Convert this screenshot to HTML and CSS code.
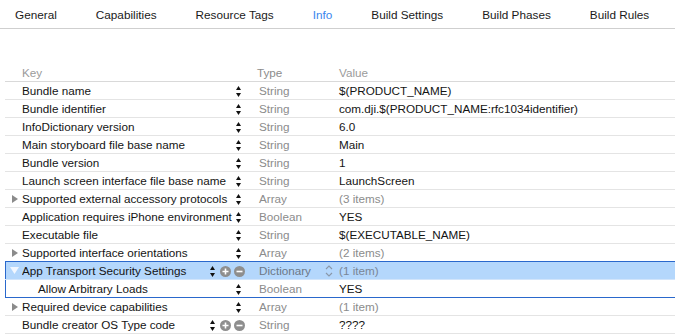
FILE: index.html
```html
<!DOCTYPE html>
<html lang="en">
  <head>
    <meta charset="UTF-8" />
    <title>Info</title>
    <link rel="stylesheet" href="styles.css">
  </head>
  <body>
    <div class="tabs">
      <span class="tab">General</span>
      <span class="tab">Capabilities</span>
      <span class="tab">Resource Tags</span>
      <span class="tab active">Info</span>
      <span class="tab">Build Settings</span>
      <span class="tab">Build Phases</span>
      <span class="tab">Build Rules</span>
    </div>

    <div class="plist">
      <div class="row head">
        <div class="key"><span class="disc"></span><span class="name">Key</span></div>
        <div class="type">Type</div>
        <div class="value">Value</div>
      </div>

      <div class="row">
        <div class="key"><span class="disc"></span><span class="name">Bundle name</span>
          <span class="ctrl"><svg class="stepper" width="5" height="11" viewBox="0 0 5 11"><path d="M0 4 L2.5 0 L5 4 Z M0 7 L5 7 L2.5 11 Z"/></svg></span>
        </div>
        <div class="type">String</div>
        <div class="value">$(PRODUCT_NAME)</div>
      </div>

      <div class="row">
        <div class="key"><span class="disc"></span><span class="name">Bundle identifier</span>
          <span class="ctrl"><svg class="stepper" width="5" height="11" viewBox="0 0 5 11"><path d="M0 4 L2.5 0 L5 4 Z M0 7 L5 7 L2.5 11 Z"/></svg></span>
        </div>
        <div class="type">String</div>
        <div class="value">com.dji.$(PRODUCT_NAME:rfc1034identifier)</div>
      </div>

      <div class="row">
        <div class="key"><span class="disc"></span><span class="name">InfoDictionary version</span>
          <span class="ctrl"><svg class="stepper" width="5" height="11" viewBox="0 0 5 11"><path d="M0 4 L2.5 0 L5 4 Z M0 7 L5 7 L2.5 11 Z"/></svg></span>
        </div>
        <div class="type">String</div>
        <div class="value">6.0</div>
      </div>

      <div class="row">
        <div class="key"><span class="disc"></span><span class="name">Main storyboard file base name</span>
          <span class="ctrl"><svg class="stepper" width="5" height="11" viewBox="0 0 5 11"><path d="M0 4 L2.5 0 L5 4 Z M0 7 L5 7 L2.5 11 Z"/></svg></span>
        </div>
        <div class="type">String</div>
        <div class="value">Main</div>
      </div>

      <div class="row">
        <div class="key"><span class="disc"></span><span class="name">Bundle version</span>
          <span class="ctrl"><svg class="stepper" width="5" height="11" viewBox="0 0 5 11"><path d="M0 4 L2.5 0 L5 4 Z M0 7 L5 7 L2.5 11 Z"/></svg></span>
        </div>
        <div class="type">String</div>
        <div class="value">1</div>
      </div>

      <div class="row">
        <div class="key"><span class="disc"></span><span class="name">Launch screen interface file base name</span>
          <span class="ctrl"><svg class="stepper" width="5" height="11" viewBox="0 0 5 11"><path d="M0 4 L2.5 0 L5 4 Z M0 7 L5 7 L2.5 11 Z"/></svg></span>
        </div>
        <div class="type">String</div>
        <div class="value">LaunchScreen</div>
      </div>

      <div class="row">
        <div class="key"><span class="disc"><svg class="tri" width="6" height="8" viewBox="0 0 6 8"><path d="M0 0 L6 4 L0 8 Z"/></svg></span><span class="name">Supported external accessory protocols</span>
          <span class="ctrl"><svg class="stepper" width="5" height="11" viewBox="0 0 5 11"><path d="M0 4 L2.5 0 L5 4 Z M0 7 L5 7 L2.5 11 Z"/></svg></span>
        </div>
        <div class="type">Array</div>
        <div class="value dim">(3 items)</div>
      </div>

      <div class="row">
        <div class="key"><span class="disc"></span><span class="name">Application requires iPhone environment</span>
          <span class="ctrl"><svg class="stepper" width="5" height="11" viewBox="0 0 5 11"><path d="M0 4 L2.5 0 L5 4 Z M0 7 L5 7 L2.5 11 Z"/></svg></span>
        </div>
        <div class="type">Boolean</div>
        <div class="value">YES</div>
      </div>

      <div class="row">
        <div class="key"><span class="disc"></span><span class="name">Executable file</span>
          <span class="ctrl"><svg class="stepper" width="5" height="11" viewBox="0 0 5 11"><path d="M0 4 L2.5 0 L5 4 Z M0 7 L5 7 L2.5 11 Z"/></svg></span>
        </div>
        <div class="type">String</div>
        <div class="value">$(EXECUTABLE_NAME)</div>
      </div>

      <div class="row before-sel">
        <div class="key"><span class="disc"><svg class="tri" width="6" height="8" viewBox="0 0 6 8"><path d="M0 0 L6 4 L0 8 Z"/></svg></span><span class="name">Supported interface orientations</span>
          <span class="ctrl"><svg class="stepper" width="5" height="11" viewBox="0 0 5 11"><path d="M0 4 L2.5 0 L5 4 Z M0 7 L5 7 L2.5 11 Z"/></svg></span>
        </div>
        <div class="type">Array</div>
        <div class="value dim">(2 items)</div>
      </div>

      <!-- selected dictionary and its child -->
      <div class="row selected">
        <div class="key"><span class="disc open"><svg width="9" height="7" viewBox="0 0 9 7"><path d="M0 0 L9 0 L4.5 7 Z"/></svg></span><span class="name">App Transport Security Settings</span>
          <span class="ctrl edit">
            <svg class="stepper" width="5" height="11" viewBox="0 0 5 11"><path d="M0 4 L2.5 0 L5 4 Z M0 7 L5 7 L2.5 11 Z"/></svg>
            <svg class="btn" width="11" height="11" viewBox="0 0 11 11"><circle cx="5.5" cy="5.5" r="5.5"/><path d="M2.5 5.5 H8.5 M5.5 2.5 V8.5"/></svg>
            <svg class="btn" width="11" height="11" viewBox="0 0 11 11"><circle cx="5.5" cy="5.5" r="5.5"/><path d="M2.5 5.5 H8.5"/></svg>
          </span>
        </div>
        <div class="type pop">Dictionary
          <svg class="chev" width="8" height="14" viewBox="0 0 8 14"><path d="M1 5 L4 2 L7 5 M1 9 L4 12 L7 9"/></svg>
        </div>
        <div class="value dim">(1 item)</div>
      </div>

      <div class="row child">
        <div class="key"><span class="disc"></span><span class="name indent">Allow Arbitrary Loads</span>
          <span class="ctrl"><svg class="stepper" width="5" height="11" viewBox="0 0 5 11"><path d="M0 4 L2.5 0 L5 4 Z M0 7 L5 7 L2.5 11 Z"/></svg></span>
        </div>
        <div class="type">Boolean</div>
        <div class="value">YES</div>
      </div>

      <div class="row">
        <div class="key"><span class="disc"><svg class="tri" width="6" height="8" viewBox="0 0 6 8"><path d="M0 0 L6 4 L0 8 Z"/></svg></span><span class="name">Required device capabilities</span>
          <span class="ctrl"><svg class="stepper" width="5" height="11" viewBox="0 0 5 11"><path d="M0 4 L2.5 0 L5 4 Z M0 7 L5 7 L2.5 11 Z"/></svg></span>
        </div>
        <div class="type">Array</div>
        <div class="value dim">(1 item)</div>
      </div>

      <div class="row">
        <div class="key"><span class="disc"></span><span class="name">Bundle creator OS Type code</span>
          <span class="ctrl edit">
            <svg class="stepper" width="5" height="11" viewBox="0 0 5 11"><path d="M0 4 L2.5 0 L5 4 Z M0 7 L5 7 L2.5 11 Z"/></svg>
            <svg class="btn" width="11" height="11" viewBox="0 0 11 11"><circle cx="5.5" cy="5.5" r="5.5"/><path d="M2.5 5.5 H8.5 M5.5 2.5 V8.5"/></svg>
            <svg class="btn" width="11" height="11" viewBox="0 0 11 11"><circle cx="5.5" cy="5.5" r="5.5"/><path d="M2.5 5.5 H8.5"/></svg>
          </span>
        </div>
        <div class="type">String</div>
        <div class="value">????</div>
      </div>
    </div>
  </body>
</html>
```

FILE: styles.css
```css
body {
  margin: 0;
  background-color: #fff;
  font-family: "Liberation Sans", Arial, sans-serif;
  color: #141414;
  overflow: hidden;
}

/* Top tab bar */
.tabs {
  display: flex;
  gap: 39px;
  height: 28px;
  align-items: center;
  padding-left: 15px;
  border-bottom: 1px solid #cfcfcf;
  font-size: 11.75px;
}

.tab {
  color: #1a1a1a;
  white-space: nowrap;
}

.tab.active {
  color: #3b86ee;
}

/* Property list table */
.plist {
  margin-top: 35px;
  margin-left: 5px;
  font-size: 11.7px;
}

.row {
  display: flex;
  height: 17px;
  line-height: 18px;
  border-bottom: 1px solid #e4e4e4;
  white-space: nowrap;
}

.row.head {
  color: #9b9b9b;
  border-bottom-color: #d9d9d9;
}

.key {
  width: 250px;
  display: flex;
  align-items: center;
  flex-shrink: 0;
}

.disc {
  width: 17px;
  height: 17px;
  display: flex;
  align-items: center;
  padding-left: 7px;
  box-sizing: border-box;
  flex-shrink: 0;
}

.disc .tri {
  fill: #8b8b8b;
}

.disc.open {
  padding-left: 5px;
}

.disc.open svg {
  fill: #f2f7ff;
}

.name {
  flex: 1;
  overflow: hidden;
}

.name.indent {
  padding-left: 16px;
}

.ctrl {
  display: flex;
  align-items: center;
  gap: 5px;
  margin-right: 14px;
  padding-top: 1px;
}

.ctrl.edit {
  gap: 3px;
  margin-right: 10px;
}

.ctrl.edit .stepper {
  margin-right: 2px;
}

.stepper {
  fill: #111;
}

.btn circle {
  fill: #8e8e8e;
}

.btn path {
  stroke: #fff;
  stroke-width: 1.6;
}

.type {
  width: 83px;
  padding-left: 4px;
  box-sizing: border-box;
  color: #8c8c8c;
  flex-shrink: 0;
}

.head .type {
  padding-left: 2px;
}

.value {
  flex: 1;
  padding-left: 1px;
}

.value.dim {
  color: #8c8c8c;
}

/* Selection */
.row.before-sel {
  border-bottom-color: #2a68cc;
}

.row.selected {
  background-color: #b4d7fc;
  border-bottom-color: #d2e5fb;
  box-shadow: inset 1px 0 0 #2a68cc;
}

.row.selected .type {
  color: #6c7786;
}

.row.selected .value.dim {
  color: #7a8696;
}

.type.pop {
  display: flex;
  align-items: center;
  justify-content: space-between;
  padding-right: 5px;
}

.chev path {
  fill: none;
  stroke: #8a97a8;
  stroke-width: 1.1;
}

.row.child {
  border-bottom-color: #2a68cc;
  box-shadow: inset 1px 0 0 #2a68cc;
}
```
